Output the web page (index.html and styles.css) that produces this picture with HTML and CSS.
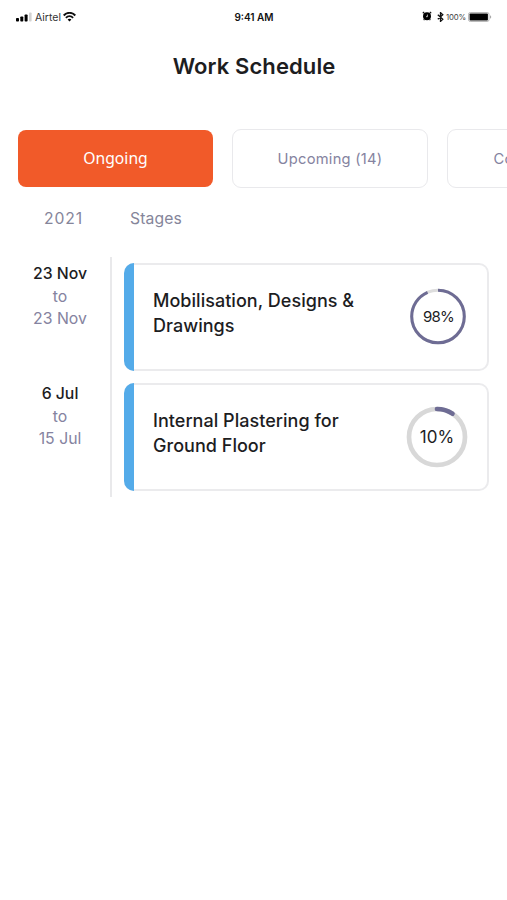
FILE: index.html
```html
<!DOCTYPE html>
<html lang="en">
<head>
<meta charset="utf-8">
<title>Work Schedule</title>
<link rel="stylesheet" href="styles.css">
</head>
<body>
<header class="status">
  <div class="status-left">
    <svg class="signal" width="16" height="10" viewBox="0 0 16 10"><rect x="0" y="6" width="3" height="3.5" rx=".8"/><rect x="4.3" y="4.5" width="3" height="5" rx=".8"/><rect x="8.6" y="2.5" width="3" height="7" rx=".8"/><rect x="13" y=".5" width="2.6" height="9" rx=".8" fill="#d2d2d2"/></svg>
    <span class="carrier">Airtel</span>
    <svg class="wifi" width="13" height="10" viewBox="0 0 13 10"><g fill="none" stroke="#111" stroke-width="1.9"><path d="M.7 3.5C4-.1 9-.1 12.3 3.5"/><path d="M2.9 5.8c2.1-2.1 5.1-2.1 7.2 0"/></g><path d="M4.6 7.4c1.1-1 2.7-1 3.8 0L6.5 9.5z"/></svg>
  </div>
  <time class="clock">9:41 AM</time>
  <div class="status-right">
    <svg class="alarm" width="10" height="10" viewBox="0 0 10 10"><circle cx="5" cy="5.3" r="4"/><path d="M.8 2.2 2.2.9M9.2 2.2 7.8.9M2.3 8.3l-.6.8M7.7 8.3l.6.8" stroke="#111" stroke-width="1.2"/><path d="M5.4 3.6v2.1H4" fill="none" stroke="#fff" stroke-width=".7"/></svg>
    <svg class="bluetooth" width="7" height="10" viewBox="0 0 7 10"><path d="m.8 2.7 5 4.5L3.5 9.4V.6l2.3 2.2-5 4.5" fill="none" stroke="#111" stroke-width="1.3"/></svg>
    <span class="percent">100%</span>
    <svg width="24" height="10" viewBox="0 0 24 10"><rect x=".5" y=".5" width="20.5" height="9" rx="1.8" fill="#fff" stroke="#aaa" stroke-width=".8"/><rect x="1.6" y="1.6" width="18.3" height="6.8" rx=".7"/><path d="M22 3.3c1.7.4 1.7 3 0 3.4z" fill="#aaa"/></svg>
  </div>
</header>
<h1 class="title">Work Schedule</h1>
<nav class="tabs">
  <button class="tab active">Ongoing</button>
  <button class="tab">Upcoming (14)</button>
  <button class="tab">Completed (2)</button>
</nav>
<div class="columns"><span class="year">2021</span><span class="stages">Stages</span></div>
<main>
  <section class="row">
    <div class="dates"><strong>23 Nov</strong><span>to</span><span>23 Nov</span></div>
    <article class="card">
      <h2>Mobilisation, Designs &amp;<br>Drawings</h2>
      <div class="progress">
        <svg width="62" height="62" viewBox="0 0 62 62"><g fill="none" stroke-width="3" transform="rotate(-90 31 31)"><circle cx="31.5" cy="32" r="26.3" stroke="#ddd"/><circle cx="31.5" cy="32" r="26.3" stroke="#6e6c94" pathLength="100" stroke-dasharray="93.5 100"/></g></svg>
        <span class="value small">98%</span>
      </div>
    </article>
  </section>
  <section class="row">
    <div class="dates"><strong>6 Jul</strong><span>to</span><span>15 Jul</span></div>
    <article class="card">
      <h2>Internal Plastering for<br>Ground Floor</h2>
      <div class="progress">
        <svg width="62" height="62" viewBox="0 0 62 62"><g fill="none" stroke-width="4.7" transform="rotate(-90 31 31)"><circle cx="31" cy="31" r="28" stroke="#d8d8d8"/><circle cx="31" cy="31" r="28" stroke="#6e6c94" stroke-linecap="round" pathLength="100" stroke-dasharray="9.3 100"/></g></svg>
        <span class="value">10%</span>
      </div>
    </article>
  </section>
</main>
</body>
</html>
```
FILE: styles.css
```css
* { box-sizing: border-box; }
body { margin: 0; height: 900px; overflow: hidden; background: #fff; color: #1d1d1f; font-family: Inter, "Liberation Sans", sans-serif; }
svg { display: block; flex: none; }
.status { height: 33px; padding: 0 15px 0 16px; display: grid; grid-template-columns: 1fr auto 1fr; align-items: center; color: #111; }
.status-left, .status-right { display: flex; align-items: center; }
.status-right { justify-content: flex-end; }
.carrier { margin: 1px 2px 0 3px; font-size: 10.5px; color: #333; }
.clock { font-size: 10px; font-weight: 600; }
.alarm { margin-bottom: 2px; }
.bluetooth { margin: 0 2px 0 5px; }
.percent { width: 21px; margin-right: 1px; font-size: 7.8px; letter-spacing: -.2px; color: #444; }
.title { margin: 0; height: 66px; padding-left: 1px; text-align: center; font: 600 22px/66px Inter, sans-serif; letter-spacing: .1px; }
.tabs { display: flex; align-items: center; gap: 19px; height: 60px; margin-top: 29px; padding-left: 18px; overflow: hidden; }
.tab { flex: 0 0 196px; height: 59px; padding: 1px 0 0; border: 1px solid #e9e9ec; border-radius: 9px; background: #fff; color: #8583a0; font: 400 14.7px/56px Inter, sans-serif; letter-spacing: .25px; }
.tab.active { flex-basis: 195px; height: 57px; padding: 0; border: 0; border-radius: 8px; background: #f15a29; color: #fff; font: 400 15.7px/55px "Noto Sans", sans-serif; letter-spacing: 0; }
.columns { display: flex; height: 69px; padding-top: 21px; color: #85859a; font-size: 15.7px; line-height: 20px; letter-spacing: .15px; }
.year { width: 130px; padding-left: 44px; letter-spacing: .9px; }
.row { display: flex; height: 120px; }
.dates { flex: 0 0 112px; display: flex; flex-direction: column; padding: 6px 0 0 10px; border-right: 2px solid #e9e9eb; text-align: center; font-size: 15.8px; line-height: 22px; color: #8583a0; }
.dates span { position: relative; top: 1px; }
.dates strong { color: #1d1d1f; font-weight: 500; }
.card { position: relative; display: flex; width: 365px; height: 108px; margin: 6px 0 0 12px; padding: 0 19px 0 19px; border: 2px solid #ebebed; border-left: 0; border-radius: 10px; }
.card::before { content: ""; position: absolute; left: 0; top: -2px; bottom: -2px; width: 10px; border-radius: 10px 0 0 10px; background: #54abe9; }
.card h2 { flex: 1; margin: 23px 0 0 10px; font-size: 18px; font-weight: 500; line-height: 25px; letter-spacing: .03px; white-space: nowrap; }
.progress { display: grid; margin-top: 21px; width: 62px; height: 62px; place-items: center; }
.progress > * { grid-area: 1 / 1; }
.value { font-size: 17px; }
.value.small { margin: 0 0 2px 3px; font-size: 15px; letter-spacing: -.8px; }
```
